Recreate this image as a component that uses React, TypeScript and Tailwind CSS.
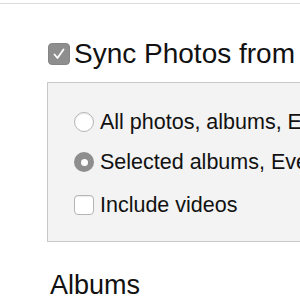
import React from "react";

function Radio({ checked }: { checked?: boolean }) {
  if (checked) {
    return (
      <div className="w-[20px] h-[20px] rounded-full bg-[#8e8e8e] flex items-center justify-center shrink-0">
        <div className="w-[7px] h-[7px] rounded-full bg-white" />
      </div>
    );
  }
  return (
    <div className="w-[20px] h-[20px] rounded-full bg-white border border-[#b5b5b5] shadow-[inset_0_1px_1px_rgba(0,0,0,0.08)] shrink-0" />
  );
}

export default function App() {
  return (
    <div
      className="w-[300px] h-[300px] bg-white overflow-hidden text-[#111]"
      style={{ fontFamily: '"Liberation Sans", Arial, sans-serif' }}
    >
      <div className="pt-[3px]">
        <div className="border-t border-[#dcdcdc]" />
      </div>
      <div className="pl-[47px]">
        <div className="mt-[36px] h-[28px] flex items-center whitespace-nowrap">
          <div className="ml-[1px] w-[22px] h-[22px] rounded-[4px] bg-[#8e8e8e] border border-[#858585] flex items-center justify-center shrink-0">
            <svg width="14" height="14" viewBox="0 0 14 14" fill="none">
              <path d="M2.5 7.5 L5.5 11 L11.5 2.5" stroke="white" strokeWidth="1.8" strokeLinecap="round" strokeLinejoin="round" />
            </svg>
          </div>
          <span className="ml-[4px] text-[28px] leading-[28px]">Sync Photos from</span>
        </div>
        <div className="mt-[14px] w-[400px] bg-[#f3f3f3] border border-[#c8c8c8] pl-[26px] pt-[27px] pb-[24px] text-[21.5px] leading-[24px] whitespace-nowrap">
          <div className="h-[24px] flex items-center">
            <Radio />
            <span className="ml-[6px]">All photos, albums, Events, and Faces</span>
          </div>
          <div className="mt-[16px] h-[24px] flex items-center">
            <Radio checked />
            <span className="ml-[6px]">Selected albums, Events, and Faces</span>
          </div>
          <div className="mt-[19px] h-[24px] flex items-center">
            <div className="w-[20px] h-[20px] rounded-[4px] bg-white border border-[#b5b5b5] shadow-[inset_0_1px_1px_rgba(0,0,0,0.08)] shrink-0" />
            <span className="ml-[6px]">Include videos</span>
          </div>
        </div>
        <div className="mt-[30px] ml-[3px] text-[27px] leading-[27px]">Albums</div>
      </div>
    </div>
  );
}
